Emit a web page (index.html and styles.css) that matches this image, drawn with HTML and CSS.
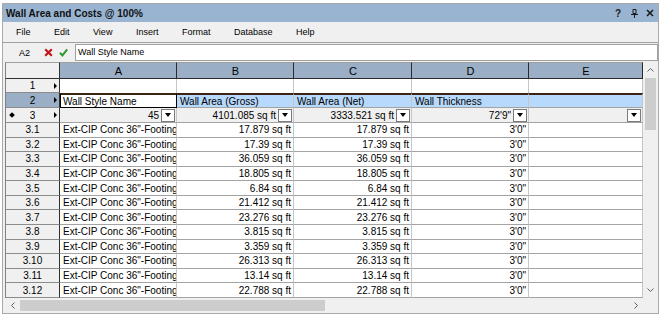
FILE: index.html
```html
<!DOCTYPE html>
<html lang="en">
<head>
  <meta charset="UTF-8">
  <title>Wall Area and Costs</title>
  <link rel="stylesheet" href="styles.css">
</head>
<body>
  <div class="window">
    <div class="titlebar">
      <span class="title">Wall Area and Costs @ 100%</span>
      <div class="title-btns">
        <span>?</span>
        <span>
          <svg width="7" height="9" viewBox="0 0 7 9"><path d="M2 0.5h3v4h-3z" fill="none" stroke="#1a1a1a"/><path d="M0 5.5h7" stroke="#1a1a1a"/><path d="M3.5 6v3" stroke="#1a1a1a"/></svg>
        </span>
        <span>
          <svg width="8" height="8" viewBox="0 0 8 8"><path d="M1 1l6 6M7 1l-6 6" stroke="#1a1a1a" stroke-width="1.6"/></svg>
        </span>
      </div>
    </div>

    <div class="menubar">
      <span>File</span>
      <span>Edit</span>
      <span>View</span>
      <span>Insert</span>
      <span>Format</span>
      <span>Database</span>
      <span>Help</span>
    </div>

    <div class="formula">
      <span class="cellref">A2</span>
      <svg class="btn-x" width="9" height="9" viewBox="0 0 9 9"><path d="M1.2 1.2l6.6 6.6M7.8 1.2l-6.6 6.6" stroke="#c0161b" stroke-width="2.2"/></svg>
      <svg class="btn-ok" width="9" height="9" viewBox="0 0 9 9"><path d="M1 4.8l2.4 2.6L8.2 1.4" fill="none" stroke="#2f9a2f" stroke-width="2"/></svg>
      <div class="input">Wall Style Name</div>
    </div>

    <div class="sheet">
      <div class="tbl">
        <div class="row hdr">
          <div class="c corner"></div>
          <div class="c ch">A</div>
          <div class="c ch">B</div>
          <div class="c ch">C</div>
          <div class="c ch">D</div>
          <div class="c ch">E</div>
        </div>

        <div class="row r1">
          <div class="c rh marked"><i></i><span>1</span><b class="tri"></b></div>
          <div class="c"></div>
          <div class="c"></div>
          <div class="c"></div>
          <div class="c"></div>
          <div class="c"></div>
        </div>

        <div class="row r2">
          <div class="c rh marked sel"><i></i><span>2</span><b class="tri"></b></div>
          <div class="c active">Wall Style Name</div>
          <div class="c">Wall Area (Gross)</div>
          <div class="c">Wall Area (Net)</div>
          <div class="c">Wall Thickness</div>
          <div class="c"></div>
        </div>

        <div class="row r3">
          <div class="c rh marked"><i class="dot"></i><span>3</span><b class="tri"></b></div>
          <div class="c num"><span>45</span><span class="dd"></span></div>
          <div class="c num"><span>4101.085 sq ft</span><span class="dd"></span></div>
          <div class="c num"><span>3333.521 sq ft</span><span class="dd"></span></div>
          <div class="c num"><span>72'9"</span><span class="dd"></span></div>
          <div class="c num"><span class="dd"></span></div>
        </div>

        <div class="row dat"><div class="c rh">3.1</div><div class="c">Ext-CIP Conc 36"-Footing</div><div class="c num">17.879 sq ft</div><div class="c num">17.879 sq ft</div><div class="c num">3'0"</div><div class="c"></div></div>
        <div class="row dat"><div class="c rh">3.2</div><div class="c">Ext-CIP Conc 36"-Footing</div><div class="c num">17.39 sq ft</div><div class="c num">17.39 sq ft</div><div class="c num">3'0"</div><div class="c"></div></div>
        <div class="row dat"><div class="c rh">3.3</div><div class="c">Ext-CIP Conc 36"-Footing</div><div class="c num">36.059 sq ft</div><div class="c num">36.059 sq ft</div><div class="c num">3'0"</div><div class="c"></div></div>
        <div class="row dat"><div class="c rh">3.4</div><div class="c">Ext-CIP Conc 36"-Footing</div><div class="c num">18.805 sq ft</div><div class="c num">18.805 sq ft</div><div class="c num">3'0"</div><div class="c"></div></div>
        <div class="row dat"><div class="c rh">3.5</div><div class="c">Ext-CIP Conc 36"-Footing</div><div class="c num">6.84 sq ft</div><div class="c num">6.84 sq ft</div><div class="c num">3'0"</div><div class="c"></div></div>
        <div class="row dat"><div class="c rh">3.6</div><div class="c">Ext-CIP Conc 36"-Footing</div><div class="c num">21.412 sq ft</div><div class="c num">21.412 sq ft</div><div class="c num">3'0"</div><div class="c"></div></div>
        <div class="row dat"><div class="c rh">3.7</div><div class="c">Ext-CIP Conc 36"-Footing</div><div class="c num">23.276 sq ft</div><div class="c num">23.276 sq ft</div><div class="c num">3'0"</div><div class="c"></div></div>
        <div class="row dat"><div class="c rh">3.8</div><div class="c">Ext-CIP Conc 36"-Footing</div><div class="c num">3.815 sq ft</div><div class="c num">3.815 sq ft</div><div class="c num">3'0"</div><div class="c"></div></div>
        <div class="row dat"><div class="c rh">3.9</div><div class="c">Ext-CIP Conc 36"-Footing</div><div class="c num">3.359 sq ft</div><div class="c num">3.359 sq ft</div><div class="c num">3'0"</div><div class="c"></div></div>
        <div class="row dat"><div class="c rh">3.10</div><div class="c">Ext-CIP Conc 36"-Footing</div><div class="c num">26.313 sq ft</div><div class="c num">26.313 sq ft</div><div class="c num">3'0"</div><div class="c"></div></div>
        <div class="row dat"><div class="c rh">3.11</div><div class="c">Ext-CIP Conc 36"-Footing</div><div class="c num">13.14 sq ft</div><div class="c num">13.14 sq ft</div><div class="c num">3'0"</div><div class="c"></div></div>
        <div class="row dat"><div class="c rh">3.12</div><div class="c">Ext-CIP Conc 36"-Footing</div><div class="c num">22.788 sq ft</div><div class="c num">22.788 sq ft</div><div class="c num">3'0"</div><div class="c"></div></div>
      </div>

      <div class="vscroll">
        <div class="arrow"><svg width="7" height="4" viewBox="0 0 7 4"><path d="M0.5 3.5l3-3 3 3" fill="none" stroke="#606060"/></svg></div>
        <div class="vthumb"></div>
        <div class="track"></div>
        <div class="arrow"><svg width="7" height="4" viewBox="0 0 7 4"><path d="M0.5 0.5l3 3 3-3" fill="none" stroke="#606060"/></svg></div>
      </div>

      <div class="hscroll">
        <div class="arrow"><svg width="4" height="7" viewBox="0 0 4 7"><path d="M3.5 0.5l-3 3 3 3" fill="none" stroke="#606060"/></svg></div>
        <div class="hthumb"></div>
        <div class="track"></div>
        <div class="arrow"><svg width="4" height="7" viewBox="0 0 4 7"><path d="M0.5 0.5l3 3-3 3" fill="none" stroke="#606060"/></svg></div>
      </div>

      <div class="scorner"></div>
    </div>
  </div>
</body>
</html>
```

FILE: styles.css
```css
* {
  box-sizing: border-box;
}

body {
  margin: 0;
  background: #fff;
  font-family: "Liberation Sans", Arial, sans-serif;
  font-size: 10px;
  color: #000;
}

.window {
  width: 657px;
  height: 311px;
  margin: 3px 0 0 2px;
  border: 1px solid #a9a9a9;
  background: #f0f0f0;
  display: flex;
  flex-direction: column;
}

/* title bar */
.titlebar {
  height: 18px;
  flex-shrink: 0;
  background: #99b4d1;
  display: flex;
  align-items: center;
  padding-left: 3px;
}

.title {
  flex: 1;
  font-weight: bold;
  font-size: 10px;
  color: #111;
}

.title-btns {
  display: flex;
  font-weight: bold;
  font-size: 10px;
  color: #1a1a1a;
}

.title-btns span {
  width: 16px;
  display: flex;
  justify-content: center;
  align-items: center;
}

/* menu */
.menubar {
  height: 20px;
  flex-shrink: 0;
  display: flex;
  align-items: center;
  gap: 23.5px;
  padding-left: 13px;
  font-size: 9px;
}

/* formula bar */
.formula {
  height: 20px;
  flex-shrink: 0;
  border-top: 1px solid #a0a0a0;
  display: flex;
  align-items: flex-start;
  padding-top: 1px;
}

.cellref {
  margin-left: 16px;
  margin-top: 4px;
  font-size: 9px;
}

.btn-x {
  margin-left: 14px;
  margin-top: 4px;
}

.btn-ok {
  margin-left: 6px;
  margin-top: 4px;
}

.input {
  flex: 1;
  height: 17px;
  margin-left: 7px;
  background: #fff;
  border: 1px solid #a0a0a0;
  padding: 0 2px;
  font-size: 9px;
  line-height: 15px;
}

/* sheet */
.sheet {
  flex: 1;
  display: grid;
  grid-template-columns: 638px 15px;
  grid-template-rows: 236px 15px;
  padding-left: 2px;
}

.tbl {
  background: #fff;
  overflow: hidden;
}

.row {
  display: grid;
  grid-template-columns: 55px 117px 117px 118px 117px 114px;
}

.row.hdr { height: 17px; }
.row.r1 { height: 14px; }
.row.r2 { height: 15px; }
.row.r3 { height: 15px; }
.row.dat { height: 14.58px; }

.c {
  display: flex;
  align-items: center;
  white-space: nowrap;
  overflow: hidden;
  padding: 0 2px 0 3px;
  border-right: 1px solid #c6c6c6;
  border-bottom: 1px solid #a3a3a3;
}

.c.num {
  justify-content: flex-end;
}

.corner {
  background: #f0f0f0;
  border-top: 1px solid #a0a0a0;
  border-left: 1px solid #808080;
  border-right: 1px solid #303030;
  border-bottom: 1px solid #303030;
}

.ch {
  background: #9aafc5;
  justify-content: center;
  font-size: 11px;
  border-top: 1px solid #a0a0a0;
  border-right: 1px solid #2b2b2b;
  border-bottom: 1px solid #2b2b2b;
}

.rh {
  background: #f0f0f0;
  justify-content: center;
  padding: 0;
  border-left: 1px solid #808080;
  border-right: 1px solid #303030;
  border-bottom: 1px solid #8c8c8c;
}

.rh.sel {
  background: #9aafc5;
}

.rh.marked {
  display: grid;
  grid-template-columns: 12px 1fr 12px;
  align-items: center;
  justify-items: center;
}

.tri {
  justify-self: end;
  margin-right: 2px;
  width: 0;
  height: 0;
  border-left: 3px solid #000;
  border-top: 3px solid transparent;
  border-bottom: 3px solid transparent;
}

.dot {
  width: 4px;
  height: 4px;
  background: #000;
  transform: rotate(45deg);
}

.r1 .c:not(.rh) {
  border-bottom: none;
}

.r2 .c:not(.rh) {
  background: #b7d9fc;
  border-top: 2px solid #3a2512;
}

.r2 .c.active {
  background: #fff;
  border-left: 1px solid #000;
  border-right: 1px solid #000;
  border-bottom: 1px solid #000;
  padding-left: 2px;
}

.r3 .c:not(.rh) {
  background: #f0f0f0;
  padding-right: 1px;
}

.dd {
  width: 14px;
  height: 13px;
  flex-shrink: 0;
  margin-left: 2px;
  background: #fff;
  border: 1px solid #7a7a7a;
  display: flex;
  align-items: center;
  justify-content: center;
}

.dd::after {
  content: "";
  width: 0;
  height: 0;
  border-top: 4px solid #000;
  border-left: 3.5px solid transparent;
  border-right: 3.5px solid transparent;
}

/* scroll bars */
.vscroll {
  background: #f0f0f0;
  display: flex;
  flex-direction: column;
  align-items: center;
}

.vscroll .arrow {
  height: 16px;
  display: flex;
  align-items: center;
  justify-content: center;
}

.vthumb {
  width: 11px;
  height: 52px;
  background: #cdcdcd;
}

.vscroll .track,
.hscroll .track {
  flex: 1;
}

.hscroll {
  background: #f0f0f0;
  display: flex;
  align-items: center;
}

.hscroll .arrow {
  width: 15px;
  height: 15px;
  display: flex;
  align-items: center;
  justify-content: center;
}

.hthumb {
  width: 305px;
  height: 11px;
  background: #cdcdcd;
}

.scorner {
  background: #f0f0f0;
}
```
